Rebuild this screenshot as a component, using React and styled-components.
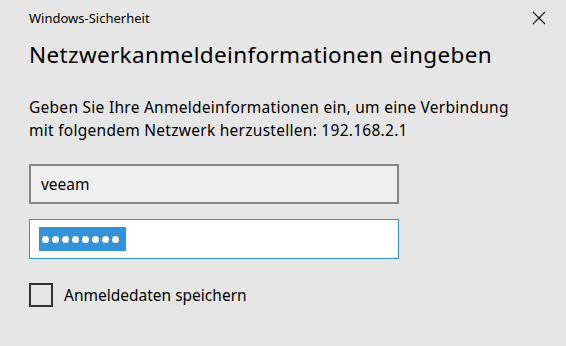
import React from 'react';
import styled, { createGlobalStyle } from 'styled-components';

const GlobalStyle = createGlobalStyle`
  html, body {
    margin: 0;
    padding: 0;
    background: #e6e6e6;
  }
  body {
    font-family: "Noto Sans", "Open Sans", sans-serif;
    color: #000;
  }
`;

const Dialog = styled.div`
  width: 566px;
  height: 346px;
  box-sizing: border-box;
  padding: 0 0 0 29px;
  background: #e6e6e6;
  display: flex;
  flex-direction: column;
`;

const TitleBar = styled.div`
  display: flex;
  justify-content: space-between;
  align-items: center;
  height: 36px;
  padding-right: 20px;
`;

const Caption = styled.span`
  font-size: 13px;
  color: #000;
  margin-top: -1px;
`;

const CloseButton = styled.button`
  border: 0;
  background: transparent;
  padding: 0;
  width: 14px;
  height: 14px;
  display: flex;
`;

const Heading = styled.h1`
  margin: 4px 0 0;
  font-size: 22.5px;
  font-weight: 400;
  line-height: 30px;
  letter-spacing: 0.35px;
`;

const Message = styled.p`
  margin: 26px 0 0;
  font-size: 15.5px;
  line-height: 23px;
  letter-spacing: 0.27px;
  width: 500px;
`;

const Field = styled.div`
  box-sizing: border-box;
  width: 370px;
  height: 40px;
  margin-top: ${({ $gap }) => $gap}px;
  display: flex;
  align-items: center;
  padding-left: ${({ $focused }) => ($focused ? 9 : 10)}px;
  font-size: 15.5px;
  background: ${({ $focused }) => ($focused ? '#ffffff' : '#efefef')};
  border: ${({ $focused }) => ($focused ? '1px solid #2f93d5' : '2px solid #878787')};
`;

const Selection = styled.span`
  background: #3393d6;
  height: 24px;
  width: 87px;
  box-sizing: border-box;
  padding-left: 3px;
  display: flex;
  align-items: center;
  gap: 3px;
`;

const Dot = styled.span`
  width: 7px;
  height: 7px;
  border-radius: 50%;
  background: #fff;
`;

const CheckRow = styled.label`
  display: flex;
  align-items: center;
  gap: 11px;
  margin-top: 24px;
  font-size: 15.5px;
`;

const Box = styled.span`
  box-sizing: border-box;
  width: 24px;
  height: 24px;
  border: 2px solid #333;
`;

export default function App() {
  const password = 'geheim12';

  return (
    <>
      <GlobalStyle />
      <Dialog>
        <TitleBar>
          <Caption>Windows-Sicherheit</Caption>
          <CloseButton aria-label="Schließen">
            <svg width="14" height="14" viewBox="0 0 14 14">
              <path d="M1 1 L13 13 M13 1 L1 13" stroke="#111" strokeWidth="1.1" />
            </svg>
          </CloseButton>
        </TitleBar>
        <Heading>Netzwerkanmeldeinformationen eingeben</Heading>
        <Message>
          Geben Sie Ihre Anmeldeinformationen ein, um eine Verbindung mit folgendem Netzwerk
          herzustellen: 192.168.2.1
        </Message>
        <Field $gap={22}>veeam</Field>
        <Field $gap={15} $focused>
          <Selection>
            {password.split('').map((_, i) => (
              <Dot key={i} />
            ))}
          </Selection>
        </Field>
        <CheckRow>
          <Box />
          Anmeldedaten speichern
        </CheckRow>
      </Dialog>
    </>
  );
}
